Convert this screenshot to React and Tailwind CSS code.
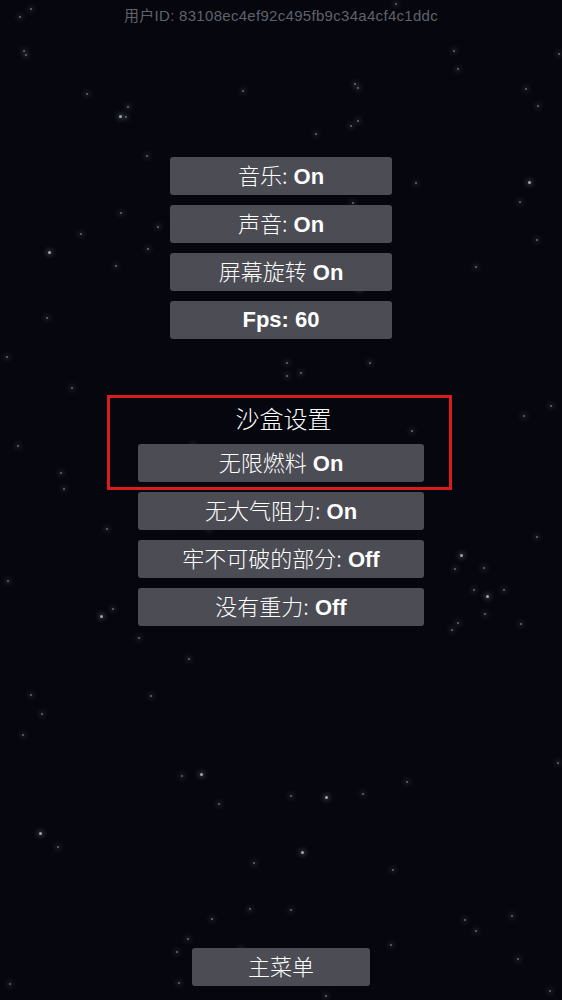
const stars = [
  [30, 8, 1.5], [19, 16, 1.5], [23, 50, 2], [25, 54, 1.5], [86, 93, 1.5], [119, 115, 2.5], [125, 116, 1.5],
  [127, 106, 1.5], [146, 155, 1.5], [173, 211, 2], [200, 181, 2.5], [120, 212, 1.5], [157, 226, 1.5],
  [147, 248, 2], [48, 251, 2.5], [80, 233, 1.5], [115, 265, 1.5], [242, 90, 1.5], [395, 3, 1.5],
  [453, 50, 2], [457, 68, 2], [558, 53, 1.5], [354, 83, 1.5], [357, 87, 1.5], [525, 88, 1.5],
  [537, 105, 1.5], [350, 125, 1.5], [357, 120, 1.5], [315, 133, 2], [415, 182, 1.5], [528, 181, 2.5],
  [519, 201, 1.5], [536, 239, 1.5], [475, 266, 2], [352, 202, 1.5], [358, 287, 2.5], [286, 362, 1.5],
  [369, 362, 1.5], [300, 372, 1.5], [286, 375, 1.5], [46, 317, 1.5], [6, 356, 2], [71, 387, 1.5],
  [17, 445, 1.5], [60, 472, 1.5], [63, 488, 1.5], [106, 528, 1.5], [7, 580, 1.5], [100, 615, 2.5],
  [112, 608, 1.5], [138, 637, 1.5], [188, 658, 2], [150, 695, 1.5], [30, 694, 1.5], [550, 405, 2],
  [523, 415, 1.5], [411, 430, 2], [536, 536, 2], [347, 544, 1.5], [460, 554, 2.5], [483, 567, 2],
  [486, 595, 2.5], [503, 589, 1.5], [473, 589, 1.5], [454, 568, 1.5], [520, 623, 1.5], [484, 613, 1.5],
  [451, 629, 1.5], [457, 622, 1.5], [192, 444, 1.5], [184, 465, 1.5], [152, 514, 1.5], [168, 524, 1.5],
  [208, 528, 1.5], [244, 548, 1.5], [41, 713, 1.5], [22, 734, 1.5], [200, 773, 2.5], [181, 775, 1.5],
  [218, 803, 1.5], [290, 795, 2], [325, 796, 2.5], [362, 793, 1.5], [406, 781, 2], [39, 832, 2.5],
  [57, 846, 1.5], [301, 851, 2.5], [253, 862, 1.5], [392, 869, 1.5], [249, 908, 1.5], [290, 909, 1.5],
  [211, 918, 2], [464, 919, 1.5], [475, 930, 2], [187, 938, 1.5], [176, 951, 1.5], [240, 948, 1.5],
  [390, 944, 1.5], [517, 958, 1.5], [9, 983, 2], [178, 982, 1.5], [325, 995, 2], [557, 762, 1.5],
  [511, 915, 1.5], [549, 990, 1.5],
];

const latin = { fontFamily: '"Liberation Sans", Arial, sans-serif' };
const cjk = { fontFamily: '"Noto Sans CJK SC", "Liberation Sans", sans-serif' };

function Btn({ label, value, width }) {
  return (
    <div
      className={`${width} h-[38px] rounded-[3px] bg-[#4b4c54] text-center text-white text-[22px] leading-[35px] whitespace-nowrap`}
    >
      <span className="font-light" style={cjk}>
        {label}
      </span>
      {value && (
        <span className="font-bold" style={latin}>
          {" " + value}
        </span>
      )}
    </div>
  );
}

export default function App() {
  return (
    <div className="relative w-full h-[1000px] overflow-hidden bg-[#05060e] flex flex-col items-center">
      {/* 星空 */}
      {stars.map(([x, y, s], i) => (
        <div
          key={i}
          className="absolute rounded-full bg-[#c9ccd6] shadow-[0_0_5px_2px_rgba(190,195,210,0.3)]"
          style={{ left: x, top: y, width: s, height: s, opacity: s > 2 ? 0.8 : 0.5 }}
        />
      ))}

      <div
        className="relative pt-[8px] text-[15px] leading-[16px] tracking-[0.3px] text-[#60626b]"
        style={{ fontFamily: '"Liberation Sans", "Noto Sans CJK SC", sans-serif' }}
      >
        用户ID: 83108ec4ef92c495fb9c34a4cf4c1ddc
      </div>

      <div className="relative mt-[133px] flex flex-col gap-[10px]">
        <Btn label="音乐:" value="On" width="w-[222px]" />
        <Btn label="声音:" value="On" width="w-[222px]" />
        <Btn label="屏幕旋转" value="On" width="w-[222px]" />
        <div
          className="w-[222px] h-[38px] rounded-[3px] bg-[#4b4c54] text-center text-white text-[22px] font-bold leading-[38px]"
          style={latin}
        >
          Fps: 60
        </div>
      </div>

      <div className="relative mt-[56px] mr-[3px] w-[345px] border-[3px] border-[#dc1c1c] pt-[5px] pb-[5px] flex flex-col">
        <div className="text-center text-white text-[24px] leading-[30px] font-light pl-[8px]" style={cjk}>
          沙盒设置
        </div>
        <div className="mt-[11px] ml-[28px]">
          <Btn label="无限燃料" value="On" width="w-[286px]" />
        </div>
      </div>

      <div className="relative mt-[2px] flex flex-col gap-[10px]">
        <Btn label="无大气阻力:" value="On" width="w-[286px]" />
        <Btn label="牢不可破的部分:" value="Off" width="w-[286px]" />
        <Btn label="没有重力:" value="Off" width="w-[286px]" />
      </div>

      <div className="relative mt-auto mb-[14px]">
        <Btn label="主菜单" width="w-[178px]" />
      </div>
    </div>
  );
}
